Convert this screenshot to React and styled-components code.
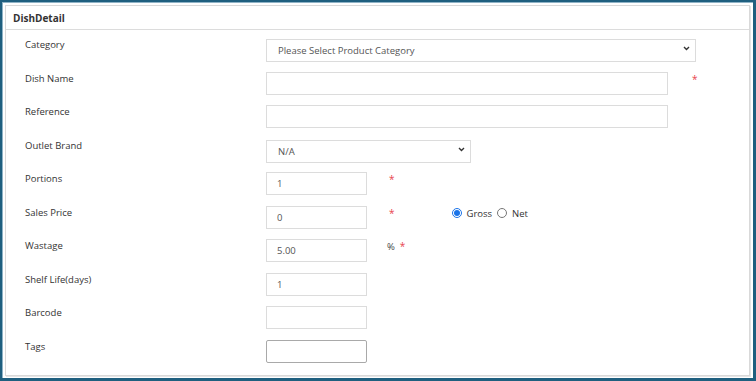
import React from "react";
import styled, { createGlobalStyle } from "styled-components";

const Global = createGlobalStyle`
  html, body { margin: 0; padding: 0; background: #fff; }
  body { font-family: "Open Sans", "Noto Sans", sans-serif; }
  * { box-sizing: border-box; }
`;

const Frame = styled.div`
  width: 756px;
  height: 381px;
  border-style: solid;
  border-color: #1f5f7f;
  border-width: 2px 3px 3px 2px;
  box-shadow: inset 1px 1px 0 #8fb3c6;
  padding: 3px 3px 2px 3px;
  display: flex;
`;

const Panel = styled.section`
  flex: 1;
  border: 1px solid #d9d9d9;
  box-shadow: 1px 1px 0 #e6e6e6;
  display: flex;
  flex-direction: column;
`;

const Header = styled.div`
  height: 24px;
  padding: 0 7px;
  display: flex;
  align-items: center;
  border-bottom: 1px solid #dcdcdc;
  font-size: 10px;
  font-weight: 700;
  color: #333;
`;

const Body = styled.div`
  padding: 8px 0 0 19px;
  display: grid;
  grid-template-columns: 241px 1fr;
  grid-auto-rows: 23px;
  row-gap: 10.55px;
`;

const Label = styled.div`
  font-size: 9.5px;
  line-height: 13px;
  color: #333;
`;

const Field = styled.div`
  display: flex;
  align-items: flex-start;
`;

const Input = styled.input`
  width: ${(p) => p.$w}px;
  height: 23px;
  border: 1px solid ${(p) => (p.$dark ? "#a9a9a9" : "#dcdcdc")};
  border-radius: ${(p) => (p.$dark ? "2px" : "0")};
  padding: 0 10px;
  font-family: "Open Sans", "Noto Sans", sans-serif;
  font-size: 9.5px;
  color: #555;
  background: #fff;
  outline: none;
  margin: 0;
`;

const SelectWrap = styled.div`
  position: relative;
  width: ${(p) => p.$w}px;
  height: 23px;
  margin-top: -1px;
`;

const Select = styled.select`
  appearance: none;
  width: 100%;
  height: 100%;
  border: 1px solid #dcdcdc;
  border-radius: 0;
  padding: 0 20px 0 11px;
  font-family: "Open Sans", "Noto Sans", sans-serif;
  font-size: 9.5px;
  color: #555;
  background: #fff;
  outline: none;
  margin: 0;
`;

const Chevron = styled.svg`
  position: absolute;
  right: 6px;
  top: 9px;
  pointer-events: none;
`;

const Suffix = styled.div`
  margin-left: ${(p) => p.$ml ?? 22}px;
  padding-top: 1px;
  display: flex;
  align-items: flex-start;
  font-size: 9.5px;
  line-height: 13px;
  color: #444;
`;

const Star = styled.span`
  color: #e8434c;
  font-size: 10px;
  margin-left: ${(p) => p.$ml ?? 0}px;
`;

const Radios = styled.div`
  margin-left: 57px;
  display: flex;
  align-items: center;
  font-size: 9.5px;
  line-height: 13px;
  color: #333;
  padding-top: 1px;
`;

const Radio = styled.input`
  width: 10px;
  height: 10px;
  margin: 0 5px 0 ${(p) => p.$ml ?? 0}px;
  accent-color: #1a73e8;
`;

const Chev = () => (
  <Chevron width="7" height="5" viewBox="0 0 7 5">
    <path d="M1 1 L3.5 3.5 L6 1" stroke="#333" strokeWidth="1.4" fill="none" />
  </Chevron>
);

export default function App() {
  return (
    <>
      <Global />
      <Frame>
        <Panel>
          <Header>DishDetail</Header>
          <Body>
            <Label>Category</Label>
            <Field>
              <SelectWrap $w={430}>
                <Select defaultValue="">
                  <option value="">Please Select Product Category</option>
                </Select>
                <Chev />
              </SelectWrap>
            </Field>

            <Label>Dish Name</Label>
            <Field>
              <Input $w={402} defaultValue="" />
              <Suffix $ml={24}>
                <Star>*</Star>
              </Suffix>
            </Field>

            <Label>Reference</Label>
            <Field>
              <Input $w={402} defaultValue="" />
            </Field>

            <Label>Outlet Brand</Label>
            <Field>
              <SelectWrap $w={205}>
                <Select defaultValue="na">
                  <option value="na">N/A</option>
                </Select>
                <Chev />
              </SelectWrap>
            </Field>

            <Label>Portions</Label>
            <Field>
              <Input $w={101} defaultValue="1" />
              <Suffix>
                <Star>*</Star>
              </Suffix>
            </Field>

            <Label>Sales Price</Label>
            <Field>
              <Input $w={101} defaultValue="0" />
              <Suffix>
                <Star>*</Star>
              </Suffix>
              <Radios>
                <Radio type="radio" name="pt" defaultChecked />
                <span>Gross</span>
                <Radio type="radio" name="pt" $ml={5} />
                <span>Net</span>
              </Radios>
            </Field>

            <Label>Wastage</Label>
            <Field>
              <Input $w={101} defaultValue="5.00" />
              <Suffix $ml={20}>
                <span>%</span>
                <Star $ml={5}>*</Star>
              </Suffix>
            </Field>

            <Label>Shelf Life(days)</Label>
            <Field>
              <Input $w={101} defaultValue="1" />
            </Field>

            <Label>Barcode</Label>
            <Field>
              <Input $w={101} defaultValue="" />
            </Field>

            <Label>Tags</Label>
            <Field>
              <Input $w={101} $dark defaultValue="" />
            </Field>
          </Body>
        </Panel>
      </Frame>
    </>
  );
}
